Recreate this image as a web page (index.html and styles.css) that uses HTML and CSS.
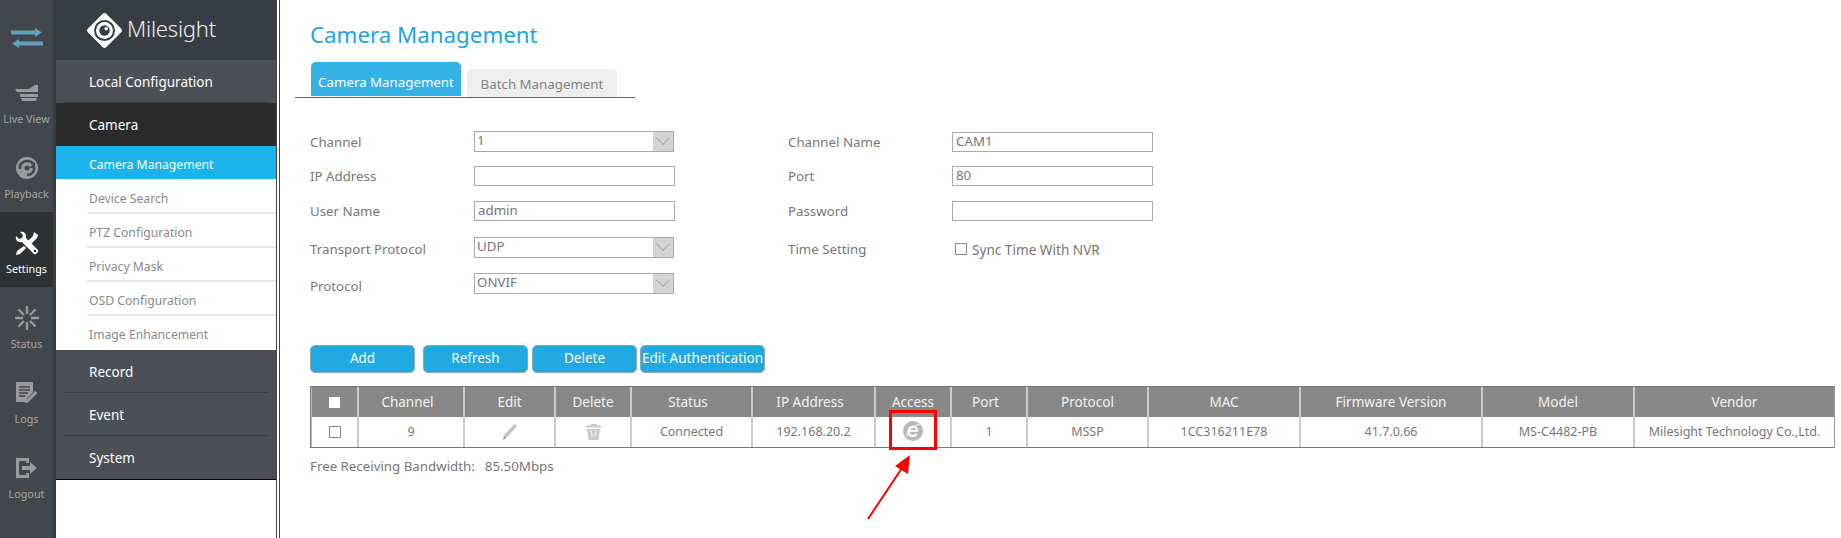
FILE: index.html
```html
<!DOCTYPE html>
<html lang="en">
<head>
<meta charset="utf-8">
<title>Camera Management</title>
<link rel="stylesheet" href="styles.css">
</head>
<body>
<div class="app">
  <aside class="rail">
    <div class="rail-top">
      <svg width="32" height="20" viewBox="0 0 32 20"><path fill="#5da3bd" d="M0 2.500h24V0l7 4.500-7 4.500V6.500H0zM32 13.500H8V11l-7 4.500L8 20v-2.500h24z"/></svg>
    </div>
    <div class="rail-item">
      <svg class="rail-icon" width="24" height="16" viewBox="0 0 24 16"><path fill="#9a9a9a" d="M0 4h14l6-4h3v7H2zM5 9h18v3H5zM6 13h16l-1 3H7z"/></svg>
      <span>Live View</span>
    </div>
    <div class="rail-item">
      <svg class="rail-icon" width="24" height="24" viewBox="0 0 24 24"><circle cx="12" cy="12" r="11" fill="#9a9a9a"/><path fill="none" stroke="#41474c" stroke-width="2.600" d="M5 13c-1-5 3-8 7-8 3 0 5 1 6 3M19 11c1 5-3 8-7 8"/><path fill="#41474c" d="M20 6v6h-6z"/><circle cx="12" cy="12" r="2.500" fill="#41474c"/></svg>
      <span>Playback</span>
    </div>
    <div class="rail-item is-active">
      <svg class="rail-icon" width="24" height="24" viewBox="0 0 24 24"><path fill="#fff" d="M1 5l3 3 3-1 1-3-3-3c4-1 7 2 6 6l12 12c1 2-2 5-4 4L7 11c-4 1-7-2-6-6z"/><path fill="#fff" d="M19 1l4 3-1 3-1 1-8 8-3-3 8-8zM9 15l2 2-6 6-4 1 1-4z"/><circle cx="20" cy="20" r="1.300" fill="#2e3235"/></svg>
      <span>Settings</span>
    </div>
    <div class="rail-item">
      <svg class="rail-icon" width="24" height="24" viewBox="0 0 24 24"><g stroke="#9a9a9a" stroke-width="2.400"><path d="M12 0v8M12 16v8M0 12h8M16 12h8M3.500 3.500l5.500 5.500M15 15l5.500 5.500M20.500 3.500L15 9M9 15l-5.500 5.500"/></g></svg>
      <span>Status</span>
    </div>
    <div class="rail-item">
      <svg class="rail-icon" width="22" height="22" viewBox="0 0 22 22"><path fill="#9a9a9a" d="M0 0h17v10l-6 7-1 3H0z"/><path stroke="#41474c" stroke-width="1.300" d="M3 5h11M3 8h11M3 11h9M3 14h6"/><path fill="#9a9a9a" d="M19 9l2.500 2-9 9-3.500 1.500L10.500 18z"/></svg>
      <span>Logs</span>
    </div>
    <div class="rail-item">
      <svg class="rail-icon" width="22" height="22" viewBox="0 0 22 22"><path fill="#9a9a9a" d="M0 1h13v5h-3V4H3v14h7v-2h3v5H0z"/><path fill="#9a9a9a" d="M6 9h8V5l7 6-7 6v-4H6z"/></svg>
      <span>Logout</span>
    </div>
  </aside>

  <nav class="nav">
    <div class="brand">
      <svg width="35" height="35" viewBox="0 0 35 35"><path fill="#fff" d="M15.500 1a3 3 0 0 1 4 0l14.500 14.500a3 3 0 0 1 0 4L19.500 34a3 3 0 0 1-4 0L1 19.500a3 3 0 0 1 0-4z"/><circle cx="17.500" cy="17.500" r="10.500" fill="#373d44"/><circle cx="17.500" cy="17.500" r="8.500" fill="#fff"/><circle cx="17.500" cy="17.500" r="5.200" fill="#373d44"/><circle cx="19.200" cy="15.800" r="1.800" fill="#fff"/><path stroke="#373d44" stroke-width="1" d="M23 5l3 -3M5 23l-3 3"/></svg>
      <span class="brand-name">Milesight</span>
    </div>
    <div class="section"><div class="section-in">Local Configuration</div></div>
    <div class="section section-open"><div class="section-in">Camera</div></div>
    <ul class="sub">
      <li class="sub-item is-current"><span>Camera Management</span></li>
      <li class="sub-item"><span>Device Search</span></li>
      <li class="sub-item"><span>PTZ Configuration</span></li>
      <li class="sub-item"><span>Privacy Mask</span></li>
      <li class="sub-item"><span>OSD Configuration</span></li>
      <li class="sub-item sub-last"><span>Image Enhancement</span></li>
    </ul>
    <div class="section"><div class="section-in">Record</div></div>
    <div class="section"><div class="section-in">Event</div></div>
    <div class="section section-last"><div class="section-in">System</div></div>
  </nav>

  <main class="main">
    <h1 class="title">Camera Management</h1>
    <div class="tabs">
      <div class="tab tab-on">Camera Management</div>
      <div class="tab tab-off">Batch Management</div>
    </div>

    <div class="form">
      <label class="lab">Channel</label>
      <div class="select"><span>1</span><i class="chev"></i></div>
      <label class="lab">Channel Name</label>
      <div class="input">CAM1</div>

      <label class="lab">IP Address</label>
      <div class="input"></div>
      <label class="lab">Port</label>
      <div class="input">80</div>

      <label class="lab">User Name</label>
      <div class="input">admin</div>
      <label class="lab">Password</label>
      <div class="input"></div>

      <label class="lab lab-low">Transport Protocol</label>
      <div class="select"><span>UDP</span><i class="chev"></i></div>
      <label class="lab lab-low">Time Setting</label>
      <div class="sync lab-low"><i class="check"></i>Sync Time With NVR</div>

      <label class="lab lab-low">Protocol</label>
      <div class="select"><span>ONVIF</span><i class="chev"></i></div>
    </div>

    <div class="actions">
      <button class="btn btn-add">Add</button>
      <button class="btn btn-refresh">Refresh</button>
      <button class="btn btn-delete">Delete</button>
      <button class="btn btn-auth">Edit Authentication</button>
    </div>

    <table class="grid">
      <colgroup>
        <col class="c1"><col class="c2"><col class="c3"><col class="c4"><col class="c5"><col class="c6"><col class="c7"><col class="c8"><col class="c9"><col class="c10"><col class="c11"><col class="c12"><col class="c13">
      </colgroup>
      <thead>
        <tr>
          <th><i class="check-head"></i></th>
          <th class="th-left">Channel</th><th>Edit</th><th>Delete</th><th class="th-left">Status</th><th class="th-left">IP Address</th><th>Access</th><th class="th-left">Port</th><th>Protocol</th><th>MAC</th><th>Firmware Version</th><th>Model</th><th>Vendor</th>
        </tr>
      </thead>
      <tbody>
        <tr>
          <td><i class="check check-row"></i></td>
          <td>9</td>
          <td><svg class="cell-icon" width="14" height="16" viewBox="0 0 14 16"><path fill="#c2c2c2" d="M11.500 0l2.500 2L4 13.500 1 11z"/><path fill="#9a9a9a" d="M1 11.500l2.500 2.200L0 16z"/></svg></td>
          <td><svg class="cell-icon" width="15" height="16" viewBox="0 0 15 16"><path fill="#cccccc" d="M5 0h5l1 1.500h4V3.500H0V1.500h4zM1 5h13l-1.500 11h-10z"/><path fill="#fff" d="M4.500 6.500h1l1.200 6h-1zM10.500 6.500h-1l-1.200 6h1z"/></svg></td>
          <td>Connected</td>
          <td>192.168.20.2</td>
          <td><svg class="cell-icon" width="20" height="20" viewBox="0 0 20 20"><circle cx="10" cy="10" r="10" fill="#b8b8b8"/><path fill="none" stroke="#fff" stroke-width="2.200" d="M6 10h8c0-3-1.500-4.500-4-4.500S5.500 7.500 5.500 10.500 7.500 15 10 15c2 0 3-.8 3.700-2"/><path fill="none" stroke="#fff" stroke-width="1" d="M3.500 15C6 9 11 4 16.500 3.500"/></svg></td>
          <td>1</td><td>MSSP</td><td>1CC316211E78</td><td>41.7.0.66</td><td>MS-C4482-PB</td><td>Milesight Technology Co.,Ltd.</td>
        </tr>
      </tbody>
    </table>

    <p class="bandwidth"><span class="bw-label">Free Receiving Bandwidth:</span>85.50Mbps</p>

    <div class="callout-box"></div>
    <svg class="callout-arrow" width="50" height="70" viewBox="0 0 50 70"><path stroke="#fe0000" stroke-width="2" d="M2 68L38 14"/><path fill="#fe0000" d="M44 4L42 23 29 15z"/></svg>
  </main>
</div>
</body>
</html>
```

FILE: styles.css
```css
* { box-sizing: border-box; }
html, body { margin: 0; height: 100%; }
body {
  background: #fff;
  color: #777;
  font-family: "Noto Sans", "Open Sans", sans-serif;
  font-size: 13.300px;
  overflow: hidden;
}
.app { display: flex; height: 538px; }

/* icon rail */
.rail {
  flex: 0 0 56px;
  background: #41474c;
  border-right: 3px solid #393e43;
  color: #a5a5a5;
  font-size: 10.800px;
}
.rail-top { height: 62px; display: flex; align-items: flex-start; justify-content: center; padding-top: 28px; }
.rail-item {
  height: 75px;
  display: flex;
  flex-direction: column;
  align-items: center;
  padding-top: 19px;
}
.rail-icon { height: 24px; }
.rail-item span { margin-top: 6px; line-height: 16px; white-space: nowrap; }
.rail-item.is-active { background: #2e3235; color: #fff; }

/* section nav */
.nav {
  flex: 0 0 221px;
  border-right: 1px solid #444;
  color: #fff;
  font-size: 13.500px;
}
.brand {
  height: 60px;
  background: #373d44;
  display: flex;
  align-items: center;
  padding: 0 0 0 31px;
  gap: 5px;
}
.brand-name { font-size: 22px; font-weight: 300; letter-spacing: -.2px; line-height: 26px; color: #eee; position: relative; top: -2px; }
.section { height: 43px; background: #4b5058; }
.section-in {
  height: 43px;
  margin: 0 7px 0 8px;
  padding-left: 25px;
  line-height: 44px;
  border-bottom: 1px solid #3b3f45;
}
.section-open { background: #2b2b2b; }
.section-open .section-in { border-bottom: 0; }
.section-last { height: 44px; border-bottom: 1px solid #000; }
.section-last .section-in { border-bottom: 0; }
.sub { list-style: none; margin: 0; padding: 0; height: 204px; overflow: hidden; background: #fff; font-size: 12.200px; color: #8a8a8a; }
.sub-item { height: 34px; padding-left: 31px; }
.sub-item span {
  display: block;
  height: 34px;
  padding-left: 2px;
  line-height: 38px;
  border-bottom: 2px solid #e6e6e6;
}
.sub-item.is-current { background: #1ab3ec; color: #fff; height: 33px; }
.sub-item.is-current span { height: 33px; line-height: 38px; border-bottom: 0; }
.sub-last span { border-bottom: 0; }
.sub-item:nth-child(2) { margin-top: 1px; }

/* main */
.main {
  flex: 1;
  position: relative;
  margin-left: 2px;
  border-left: 1px solid #444;
  padding-left: 30px;
  min-width: 0;
}
.title {
  margin: 0;
  padding-top: 18px;
  height: 62px;
  font-size: 22.300px;
  font-weight: 400;
  line-height: 34px;
  color: #1fa6de;
}
.tabs {
  display: flex;
  align-items: flex-end;
  width: 340px;
  height: 36px;
  margin-left: -15px;
  padding-left: 16px;
  gap: 6px;
  border-bottom: 1px solid #666;
}
.tab { width: 150px; text-align: center; border-radius: 5px 5px 0 0; }
.tab-on { height: 34px; line-height: 41px; background: #34b2e6; color: #fff; margin-bottom: 1px; }
.tab-off { height: 28px; line-height: 30px; background: #efefef; color: #808080; }

.form {
  display: grid;
  grid-template-columns: 164px 314px 164px 202px;
  grid-template-rows: 33px 35px 36px 36px 37px;
  align-items: center;
  margin-top: 27px;
  height: 179px;
}
.lab { line-height: 18px; }
.lab-low { position: relative; top: 2px; }
.input, .select {
  height: 20px;
  width: 201px;
  border: 1px solid #aaa;
  background: #fff;
  line-height: 17px;
  padding-left: 3px;
  color: #777;
}
.select {
  width: 200px;
  height: 21px;
  display: flex;
  justify-content: space-between;
  padding: 0 0 0 2px;
}
.chev {
  position: relative;
  flex: 0 0 20px;
  background: #d4d4d4;
}
.chev::after {
  content: "";
  position: absolute;
  left: 5px;
  top: 1px;
  width: 9px;
  height: 9px;
  border-right: 1px solid #aaa;
  border-bottom: 1px solid #aaa;
  transform: rotate(45deg);
}
.sync { display: flex; align-items: center; font-size: 13.600px; }
.check {
  display: inline-block;
  width: 12px;
  height: 12px;
  border: 1px solid #888;
  background: #fff;
  margin: 0 5px 0 3px;
}
.actions { display: flex; margin-top: 41px; height: 28px; }
.btn {
  height: 28px;
  padding: 0 0 2px;
  border: 1px solid #8fa7b5;
  border-radius: 5px;
  background: #21a9e1;
  color: #fff;
  font: inherit;
  font-size: 13.500px;
}
.btn-add { width: 105px; margin-right: 8px; }
.btn-refresh { width: 105px; margin-right: 4px; }
.btn-delete { width: 105px; margin-right: 3px; }
.btn-auth { width: 125px; white-space: nowrap; }

.grid {
  table-layout: fixed;
  border-collapse: separate;
  border-spacing: 0;
  width: 1523px;
  margin-top: 13px;
  border-top: 1px solid #777;
  border-bottom: 1px solid #777;
  border-left: 1px solid #777;
  border-right: 1px solid #999;
  text-align: center;
}
.c1 { width: 48px; } .c2 { width: 106px; } .c3 { width: 91px; } .c4 { width: 76px; }
.c5 { width: 121px; } .c6 { width: 123px; } .c7 { width: 76px; } .c8 { width: 76px; }
.c9 { width: 121px; } .c10 { width: 152px; } .c11 { width: 182px; } .c12 { width: 152px; } .c13 { width: 199px; }
.grid th {
  height: 30px;
  padding: 0;
  background: #888;
  color: #f2f2f2;
  font-weight: 400;
  font-size: 13.500px;
  border-right: 2px solid #ccc;
}
.grid th.th-left { padding-right: 7px; }
.grid td {
  height: 30px;
  padding: 0 0 2px;
  font-size: 12.500px;
  color: #777;
  border-right: 2px solid #ccc;
  white-space: nowrap;
}
.grid th:first-child, .grid td:first-child { border-left: 1px solid #bbb; }
.grid th:last-child, .grid td:last-child { border-right: 0; }
.check-head { display: inline-block; width: 11px; height: 11px; background: #fff; vertical-align: -1px; }
.check-row { margin: 0; vertical-align: -2px; }
.cell-icon { display: inline-block; vertical-align: middle; }
.bandwidth { margin: 9px 0 0; line-height: 18px; }
.bw-label { margin-right: 10px; }

/* annotation drawn over the table */
.callout-box {
  position: absolute;
  left: 609px;
  top: 410px;
  width: 48px;
  height: 40px;
  border: 3px solid #fe0000;
}
.callout-arrow { position: absolute; left: 586px; top: 451px; }
```
